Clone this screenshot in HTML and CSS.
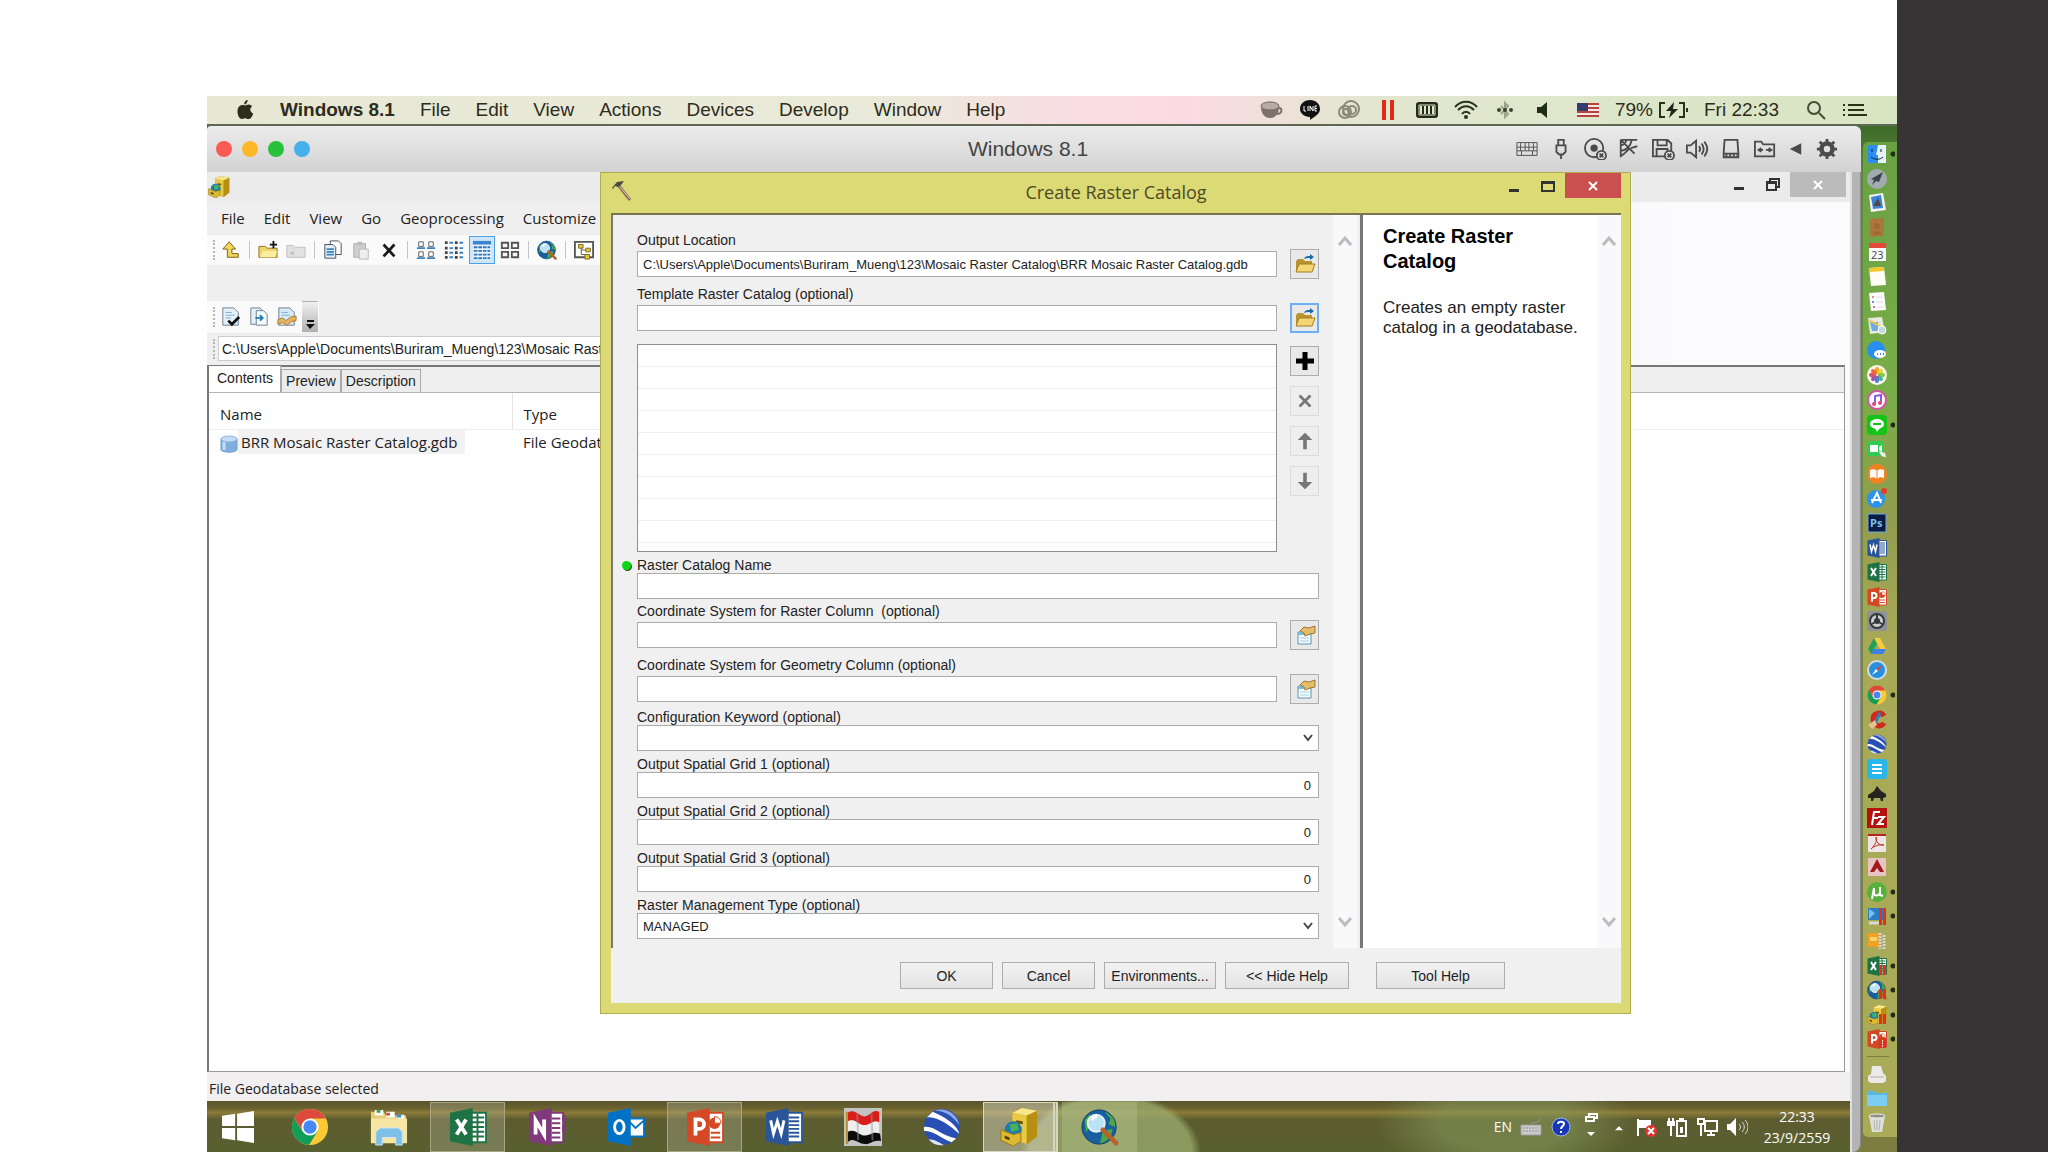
FILE: index.html
```html
<!DOCTYPE html>
<html lang="en">

<head>
    <meta charset="utf-8">
    <title>Create Raster Catalog</title>
    <link rel="stylesheet" href="styles.css">
</head>

<body>
    <!-- icons that are used more than once -->
    <svg class="defs" width="0" height="0">
        <symbol id="chrome" viewBox="0 0 40 40">
            <circle cx="20" cy="20" r="19" fill="#fbc934" />
            <path d="M3.500 10.500A19 19 0 0 0 19 39L28 24.500L12 24.500z" fill="#129d58" />
            <path d="M3.500 10.500A19 19 0 0 1 36.500 11H20L12 24z" fill="#dc4a3d" />
            <circle cx="20" cy="20" r="9" fill="#fff" />
            <circle cx="20" cy="20" r="7" fill="#4587f4" />
        </symbol>
        <symbol id="excel" viewBox="0 0 40 40">
            <path d="M22 5h17v31H22z" fill="#fff" stroke="#1f7244" stroke-width="2" />
            <path d="M24 10h13M24 15h13M24 20h13M24 25h13M24 30h13M30 6v29" stroke="#1f7244" stroke-width="2" />
            <path d="M1 5L25 0V40L1 35z" fill="#1f7244" />
            <path d="M8 12L18 28M18 12L8 28" stroke="#fff" stroke-width="4" />
        </symbol>
        <symbol id="ppt" viewBox="0 0 40 40">
            <path d="M22 5h17v31H22z" fill="#fff" stroke="#d44826" stroke-width="2" />
            <path d="M26 26h10M26 31h10" stroke="#d44826" stroke-width="2" />
            <circle cx="30" cy="16" r="6" fill="#d44826" />
            <path d="M30 16V9a7 7 0 0 1 7 7z" fill="#fff" stroke="#d44826" />
            <path d="M1 5L25 0V40L1 35z" fill="#d44826" />
            <path d="M10 29V12h4a5 5 0 0 1 0 10h-4" fill="none" stroke="#fff" stroke-width="4" />
        </symbol>
        <symbol id="word" viewBox="0 0 40 40">
            <path d="M22 5h17v31H22z" fill="#fff" stroke="#2a5699" stroke-width="2" />
            <path d="M25 10h11M25 14h11M25 18h11M25 22h11M25 26h11M25 30h11" stroke="#2a5699" stroke-width="2" />
            <path d="M1 5L25 0V40L1 35z" fill="#2a5699" />
            <path d="M6 13L9 27L13 14L17 27L20 13" fill="none" stroke="#fff" stroke-width="3" />
        </symbol>
        <symbol id="earth" viewBox="0 0 40 40">
            <circle cx="20" cy="20" r="19" fill="#2a4fb4" />
            <path d="M4 10C14 8 28 18 38 27C38 23 30 12 10 4z" fill="#fff" />
            <path d="M1 20C12 18 20 30 35 32L30 36C22 34 12 24 1 24z" fill="#fff" />
            <path d="M12 3C20 2 32 8 38 18A19 19 0 0 0 12 3z" fill="#8fa9e4" />
            <path d="M6 33C12 33 16 36 22 39C14 40 9 37 6 33z" fill="#dfe8fa" />
        </symbol>
        <symbol id="globe" viewBox="0 0 40 40">
            <circle cx="19" cy="20" r="18" fill="#17609f" stroke="#0e3d6b" />
            <path d="M25 4C33 7 37 14 36 20L29 17L31 11zM23 24L33 22C33 30 27 36 20 37zM4 12L10 6L9 20L5 26z" fill="#4da744" />
            <circle cx="16" cy="16" r="9" fill="#b9e3f4" stroke="#e9eef2" stroke-width="2" />
            <path d="M12 13a5 5 0 0 1 5-4" fill="none" stroke="#fff" stroke-width="3" />
            <path d="M23 23L37 37" stroke="#b5622c" stroke-width="5" stroke-linecap="round" />
        </symbol>
        <symbol id="catalog" viewBox="0 0 40 40">
            <path d="M13 5L22 0L39 3V30L29 38L13 34z" fill="#b98f12" />
            <path d="M13 5L28 8V38L13 33z" fill="#e8ca45" />
            <path d="M13 5L23 0L39 3L28 8z" fill="#f8e88d" />
            <path d="M17 13L24 14V17L17 16z" fill="#6b5308" />
            <circle cx="14" cy="23" r="9" fill="#1e79ad" />
            <path d="M10 17L18 16L20 23L12 25z" fill="#47b25a" />
            <path d="M1 23L14 28L22 26V35L14 40L1 34z" fill="#ddb92f" stroke="#9c7a12" />
            <path d="M5 29L10 31V34L5 32z" fill="#4e3d07" />
        </symbol>
        <symbol id="folder-out" viewBox="0 0 22 22">
            <path d="M2 8L4 6H9L11 8H18V19H2z" fill="#b8952e" />
            <path d="M2 19L5 11H21L18 19z" fill="#f4d774" stroke="#a07f1e" />
            <path d="M10 6C11 3 13 3 16 3V1L20 4L16 7V5C13 5 12 5 10 6z" fill="#1f68a6" />
        </symbol>
        <symbol id="props" viewBox="0 0 22 22">
            <path d="M4 8H17V20H4z" fill="#f5fbfe" stroke="#5a93ad" />
            <path d="M4 8H17V11H4z" fill="#79bfdd" />
            <path d="M6 14h9M6 17h9" stroke="#a5cfe0" />
            <path d="M6 7L10 3L15 4L21 2V9L16 10L11 12L10 9z" fill="#e5bd68" stroke="#9c7730" />
        </symbol>
        <symbol id="pause" viewBox="0 0 20 20">
            <path d="M12 9h3v10h-3zM16 9h3v10h-3z" fill="#e2301f" />
        </symbol>
        <symbol id="chev-up" viewBox="0 0 16 12">
            <path d="M2 10L8 3L14 10" fill="none" stroke="#bdbdbd" stroke-width="3" />
        </symbol>
        <symbol id="chev-down" viewBox="0 0 16 12">
            <path d="M2 2L8 9L14 2" fill="none" stroke="#bdbdbd" stroke-width="3" />
        </symbol>
    </svg>

    <main class="desktop">
        <header class="menubar">
            <nav class="mac-menu">
                <svg class="apple" viewBox="0 0 20 22"><path d="M13 0C13 3 11 5 9 5C9 2 11 0 13 0zM10 6C11 6 12 5 14 5C16 5 17 6 18 7C15 9 15 13 19 15C18 18 16 21 14 21C12 21 12 20 10 20C8 20 8 21 6 21C3 20 1 15 2 10C3 6 6 5 8 5.500z" fill="#2e2c1c" /></svg>
                <a href="#"><b>Windows 8.1</b></a>
                <a href="#">File</a>
                <a href="#">Edit</a>
                <a href="#">View</a>
                <a href="#">Actions</a>
                <a href="#">Devices</a>
                <a href="#">Develop</a>
                <a href="#">Window</a>
                <a href="#">Help</a>
            </nav>
            <div class="mac-status">
                <svg viewBox="0 0 24 20"><ellipse cx="11" cy="6" rx="9" ry="4" fill="#b9aaa2" stroke="#6e625d" /><path d="M2 7C2 13 5 18 11 18S20 13 20 7C16 11 6 11 2 7z" fill="#7d716c" /><path d="M20 8C24 8 23 14 18 14" fill="none" stroke="#7d716c" stroke-width="2" /></svg>
                <svg viewBox="0 0 24 20"><path d="M12 0C18 0 22 4 22 9C22 14 16 17 12 20V17C6 17 2 13 2 9C2 4 6 0 12 0z" fill="#111" /><path d="M6 6v5h2M10 6v5M12 11V6l3 5V6M19 6h-2v5h2M17 8.500h2" fill="none" stroke="#fff" /></svg>
                <svg viewBox="0 0 24 20"><g fill="none" stroke="#8b877b" stroke-width="2"><circle cx="14" cy="9" r="8" /><circle cx="8" cy="12" r="6" /><circle cx="15" cy="10" r="4" /><circle cx="9" cy="12" r="3" /></g></svg>
                <svg viewBox="0 0 24 20"><path d="M6 0h4v20H6zM14 0h4v20h-4z" fill="#e02a14" /></svg>
                <svg viewBox="0 0 24 20"><rect x="1" y="2" width="22" height="16" rx="3" fill="#24291a" /><path d="M6 6v8M10 6v8M14 6v8M18 6v8" stroke="#dfe8cb" stroke-width="2" /><path d="M4 5h16v10H4z" fill="none" stroke="#dfe8cb" /></svg>
                <svg viewBox="0 0 24 20"><g fill="none" stroke="#24351a" stroke-width="2"><path d="M1 7C7 0 17 0 23 7" /><path d="M4 10C9 5 15 5 20 10" /><path d="M8 14C10 11 14 11 16 14" /></g><circle cx="12" cy="17" r="2" fill="#24351a" /></svg>
                <svg viewBox="0 0 24 20"><path d="M8 6L15 14L12 17V3L15 6L8 14" fill="none" stroke="#9aa588" stroke-width="2" /><g fill="#38432d"><circle cx="6" cy="10" r="2" /><circle cx="12" cy="10" r="2" /><circle cx="18" cy="10" r="2" /></g></svg>
                <svg viewBox="0 0 24 20"><path d="M5 7h4l6-5v16l-6-5H5z" fill="#1e2d14" /></svg>
                <svg class="flag" viewBox="0 0 24 20"><rect x="1" y="3" width="22" height="14" fill="#f3e6e0" /><path d="M1 4h22M1 8h22M1 12h22M1 16h22" stroke="#b8423e" stroke-width="2" /><rect x="1" y="3" width="11" height="8" fill="#333b70" /></svg>
                <span class="battery">79% <svg viewBox="0 0 32 20"><path d="M8 3H3v14h5M22 3h5v14h-5" fill="none" stroke="#24351a" stroke-width="2" /><path d="M29 8h2v4h-2z" fill="#24351a" /><path d="M17 2L9 11h5l-2 7l9-9h-5z" fill="#1c2814" /></svg></span>
                <span class="clock">Fri 22:33</span>
                <svg viewBox="0 0 24 20"><circle cx="10" cy="8" r="6" fill="none" stroke="#3f4f33" stroke-width="2" /><path d="M15 13L21 19" stroke="#3f4f33" stroke-width="2" /></svg>
                <svg viewBox="0 0 24 20"><path d="M0 5h2M0 10h2M0 15h2M5 5h16M5 10h16M5 15h19" stroke="#24351a" stroke-width="2" /></svg>
            </div>
        </header>

        <div class="workspace">
            <section class="vm">
                <div class="vm-title">
                    <div class="lights">
                        <button class="light red" aria-label="Close"></button>
                        <button class="light yellow" aria-label="Minimize"></button>
                        <button class="light green" aria-label="Zoom"></button>
                        <button class="light blue" aria-label="Coherence"></button>
                    </div>
                    <h1>Windows 8.1</h1>
                    <div class="vm-icons">
                        <svg viewBox="0 0 24 24"><path d="M1 5h22v14H1zM1 10h22M1 14h22M5 5v9M10 5v9M14 5v9M19 5v9M6 14v5M18 14v5" stroke-width="1" /></svg>
                        <svg viewBox="0 0 24 24"><path d="M9 2h6v6H9zM7 8h10v7l-3 3h-4l-3-3zM12 18v5" /></svg>
                        <svg viewBox="0 0 24 24"><circle cx="11" cy="11" r="10" /><circle cx="11" cy="11" r="3" class="solid" /><circle cx="19" cy="19" r="5" class="disc" /><path d="M17 17l4 4M21 17l-4 4" /></svg>
                        <svg viewBox="0 0 24 24"><path d="M3 2h18M3 2v19M3 2l15 15M3 14C8 14 14 9 15 2M3 8C6 8 9 5 9 2M8 16l4-4M14 11l7-2M3 20l5-4" /></svg>
                        <svg viewBox="0 0 24 24"><path d="M1 2h16l4 4v14H1zM6 2v6h10V2M5 20v-8h12v4" /><circle cx="19" cy="19" r="5" class="disc" /><path d="M17 17l4 4M21 17l-4 4" /></svg>
                        <svg viewBox="0 0 24 24"><path d="M1 8h4l6-5v18l-6-5H1zM14 9C16 11 16 13 14 15M17 6C20 10 20 14 17 18M20 4C24 9 24 15 20 20" /></svg>
                        <svg viewBox="0 0 24 24"><path d="M5 2h14l1 14v5H4v-5zM4 17h16" /><path d="M6 19h2M10 19h2M14 19h2M18 19h1" stroke-width="3" /></svg>
                        <svg viewBox="0 0 24 24"><path d="M1 4h7l2 3h12v13H1zM6 13h4M8 11l-3 2l3 2M13 13h5M16 11l3 2l-3 2" /></svg>
                        <svg class="narrow" viewBox="0 0 24 24"><path d="M18 6v12L6 12z" class="solid" /></svg>
                        <svg viewBox="0 0 24 24"><circle cx="12" cy="12" r="6" stroke-width="5" /><path d="M12 1v5M12 18v5M1 12h5M18 12h5M4 4l4 4M16 16l4 4M20 4l-4 4M8 16l-4 4" stroke-width="3" /></svg>
                    </div>
                </div>

                <div class="vm-body">
                    <div class="guest">
                        <div class="arc-title">
                            <svg class="arc-logo"><use href="#catalog" /></svg>
                            <div class="win-controls">
                                <button aria-label="Minimize"><svg viewBox="0 0 16 16"><path d="M3 10h10v3H3z" fill="#333" /></svg></button>
                                <button aria-label="Restore"><svg viewBox="0 0 16 16"><path d="M2 5h9v8H2zM2 6h9M5 5V2h9v8h-3" fill="none" stroke="#333" stroke-width="2" /></svg></button>
                                <button class="close" aria-label="Close"><svg viewBox="0 0 16 16"><path d="M4 4l8 8M12 4l-8 8" stroke="#fff" stroke-width="2" /></svg></button>
                            </div>
                        </div>
                        <nav class="arc-menu">
                            <a href="#">File</a>
                            <a href="#">Edit</a>
                            <a href="#">View</a>
                            <a href="#">Go</a>
                            <a href="#">Geoprocessing</a>
                            <a href="#">Customize</a>
                        </nav>
                        <div class="toolbar">
                            <i class="grip"></i>
                            <button aria-label="Up one level"><svg viewBox="0 0 22 22"><path d="M9 2L16 10H12V15H19V19H7V10H2z" fill="#f1d65c" stroke="#6f5a12" /></svg></button>
                            <i class="sep"></i>
                            <button aria-label="Connect to folder"><svg viewBox="0 0 22 22"><path d="M1 7h7l2 2h11v10H1z" fill="#ecd56a" stroke="#8a6f1a" /><path d="M2 19l3-7h16l-2 7z" fill="#f9eda0" /><path d="M17 1v8M13 5h8" stroke="#111" stroke-width="2" /></svg></button>
                            <button aria-label="Disconnect folder"><svg viewBox="0 0 22 22"><path d="M1 6h7l2 2h11v11H1z" fill="#e1e1e2" stroke="#bdbdbd" /><path d="M5 13l4 3M9 13l-4 3" stroke="#aaa" /></svg></button>
                            <i class="sep"></i>
                            <button aria-label="Copy"><svg viewBox="0 0 22 22"><path d="M8 1h9l3 3v12H8z" fill="#fff" stroke="#445" /><path d="M2 5h9l3 3v12H2z" fill="#e3f0fb" stroke="#445" /><path d="M4 10h8M4 13h8M4 16h8" stroke="#3c82bd" stroke-width="2" /></svg></button>
                            <button aria-label="Paste"><svg viewBox="0 0 22 22"><path d="M3 4h13v15H3z" fill="#cfcfd0" stroke="#aaa" /><path d="M7 2h5v4H7z" fill="#bbb" /><path d="M9 10h10v11H9z" fill="#eee" stroke="#b5b5b5" /></svg></button>
                            <button aria-label="Delete"><svg viewBox="0 0 22 22"><path d="M5 5L17 18M17 5L5 18" stroke="#1a1a1a" stroke-width="3" /></svg></button>
                            <i class="sep"></i>
                            <button aria-label="Large icons"><svg viewBox="0 0 22 22"><path d="M3 2h5v5H3zM14 2h5v5h-5zM3 13h5v5H3zM14 13h5v5h-5z" fill="#fff" stroke="#555" /><path d="M1 9h9M12 9h9M1 20h9M12 20h9" stroke="#3c82bd" stroke-width="2" /></svg></button>
                            <button aria-label="List"><svg viewBox="0 0 22 22"><path d="M1 3h3M1 9h3M1 14h3M1 19h3M12 3h3M12 9h3M12 14h3M12 19h3" stroke="#444" stroke-width="3" /><path d="M6 3h4M6 9h4M6 14h4M6 19h4M17 3h4M17 9h4M17 14h4M17 19h4" stroke="#3c82bd" stroke-width="2" /></svg></button>
                            <button class="on" aria-label="Details"><svg viewBox="0 0 22 22"><path d="M1 1h20v20H1z" fill="#e5f3ff" /><path d="M1 3h20" stroke="#3a86d0" stroke-width="4" /><path d="M2 8h18M2 12h18M2 16h18M2 20h18" stroke="#3476b5" stroke-width="2" stroke-dasharray="4 1" /></svg></button>
                            <button aria-label="Thumbnails"><svg viewBox="0 0 22 22"><path d="M2 3h7v6H2zM13 3h7v6h-7zM2 13h7v6H2zM13 13h7v6h-7z" fill="#f6f6f6" stroke="#555" stroke-width="2" /></svg></button>
                            <i class="sep"></i>
                            <button aria-label="Launch ArcMap"><svg><use href="#globe" /></svg></button>
                            <i class="sep"></i>
                            <button aria-label="Catalog tree"><svg viewBox="0 0 22 22"><path d="M1 2h20v17H1z" fill="#fff" stroke="#555" stroke-width="2" /><path d="M8 8v8h5M8 11h5" fill="none" stroke="#555" /><path d="M5 5h5v4H5zM13 9h5v4h-5zM12 16h5v5h-5z" fill="#e9c63b" stroke="#7a641c" /></svg></button>
                        </div>
                        <div class="toolbar second">
                            <i class="grip"></i>
                            <button aria-label="Validate"><svg viewBox="0 0 22 22"><path d="M2 1h12l5 5v14H2z" fill="#e4f1fa" stroke="#687987" /><path d="M5 6h7M5 9h10M5 12h6" stroke="#7aa9c9" /><path d="M8 15l4 4l8-8" fill="none" stroke="#111" stroke-width="3" /></svg></button>
                            <button aria-label="Export"><svg viewBox="0 0 22 22"><path d="M2 1h10l4 4v14H2z" fill="#e4f1fa" stroke="#687987" /><path d="M8 4h8l4 4v12H8z" fill="#f3fafe" stroke="#687987" /><path d="M7 12h8M12 9l3 3l-3 3" fill="none" stroke="#1f7ab0" stroke-width="2" /></svg></button>
                            <button aria-label="Properties"><svg viewBox="0 0 22 22"><path d="M2 1h12l5 5v14H2z" fill="#d5eaf6" stroke="#687987" /><path d="M5 6h7M5 9h9" stroke="#7aa9c9" /><path d="M1 14l5-2l4 3l5-4l6-1v5l-5 1l-5 4l-5-3l-5 2z" fill="#e6b45c" stroke="#a5762c" /></svg></button>
                            <button class="more" aria-label="Toolbar options"><svg viewBox="0 0 14 26"><path d="M4 17h7" stroke="#111" stroke-width="2" /><path d="M3 20h9l-5 5z" fill="#111" /></svg></button>
                        </div>
                        <div class="pathbar">
                            <i class="grip"></i>
                            <input type="text" aria-label="Location" value="C:\Users\Apple\Documents\Buriram_Mueng\123\Mosaic Raster Catalog">
                        </div>

                        <div class="content">
                            <div class="tabs">
                                <button class="tab active">Contents</button>
                                <button class="tab">Preview</button>
                                <button class="tab">Description</button>
                            </div>
                            <table class="files">
                                <thead>
                                    <tr>
                                        <th class="name">Name</th>
                                        <th>Type</th>
                                    </tr>
                                </thead>
                                <tbody>
                                    <tr>
                                        <td><svg viewBox="0 0 18 18"><path d="M1 4v11C4 18 14 18 17 15V4z" fill="#7eaede" stroke="#6f9cc9" /><ellipse cx="9" cy="4" rx="8" ry="3" fill="#c3dcf5" stroke="#8fb4da" /><path d="M4 7v8" stroke="#c3dcf5" stroke-width="3" /></svg><span>BRR Mosaic Raster Catalog.gdb</span></td>
                                        <td>File Geodatabase</td>
                                    </tr>
                                </tbody>
                            </table>
                        </div>
                        <div class="statusbar">File Geodatabase selected</div>

                        <footer class="taskbar">
                            <button class="start" aria-label="Start"><svg viewBox="0 0 34 34"><path d="M0 5L14 3V16H0zM16 3L34 0V16H16zM0 18H14V31L0 29zM16 18H34V34L16 31z" fill="#fff" /></svg></button>
                            <button class="task" aria-label="Chrome"><svg><use href="#chrome" /></svg></button>
                            <button class="task" aria-label="Explorer"><svg viewBox="0 0 40 40"><path d="M1 4h13l3 4h21v28H1z" fill="#e7cd78" /><path d="M5 2h9v6H5zM17 4h9v6h-9zM28 7h8v5h-8z" fill="#fff" /><path d="M7 2h4v3H7z" fill="#3da04b" /><path d="M17 5h4v3h-4z" fill="#c9533a" /><path d="M28 7h5v3h-5z" fill="#3d8ec9" /><path d="M1 11h38v26H1z" fill="#f7e6a3" /><path d="M6 39V25L11 21H30L34 25V39H27V31H13V39z" fill="#7fc1e6" stroke="#cbe8f7" /></svg></button>
                            <button class="task open" aria-label="Excel"><svg><use href="#excel" /></svg></button>
                            <button class="task" aria-label="OneNote"><svg viewBox="0 0 40 40"><path d="M22 5h15v31H22z" fill="#fff" stroke="#80397b" stroke-width="2" /><path d="M25 11h9M25 16h9M25 21h9M25 26h9M25 31h9" stroke="#80397b" stroke-width="2" /><path d="M36 8h3v7h-3zM36 18h3v7h-3z" fill="#80397b" /><path d="M1 5L25 0V40L1 35z" fill="#80397b" /><path d="M8 28V13L17 28V12" fill="none" stroke="#fff" stroke-width="4" /></svg></button>
                            <button class="task" aria-label="Outlook"><svg viewBox="0 0 40 40"><path d="M22 11h17v19H22z" fill="#fff" stroke="#0072c6" stroke-width="2" /><path d="M22 13l8 8l9-8" fill="none" stroke="#0072c6" stroke-width="2" /><path d="M1 5L25 0V40L1 35z" fill="#0072c6" /><ellipse cx="13" cy="20" rx="5" ry="7" fill="none" stroke="#fff" stroke-width="3" /></svg></button>
                            <button class="task open" aria-label="PowerPoint"><svg><use href="#ppt" /></svg></button>
                            <button class="task" aria-label="Word"><svg><use href="#word" /></svg></button>
                            <button class="task" aria-label="Flag"><svg viewBox="0 0 40 40"><path d="M0 0h40v40H0z" fill="#c3c3c3" /><path d="M4 5C11 0 16 9 22 9C28 8 30 1 37 4V15C30 12 28 18 22 18C15 19 12 10 4 14z" fill="#d81e1a" /><path d="M4 14C12 10 15 19 22 18C28 18 30 12 37 15V27C30 24 28 29 22 29C15 29 12 21 4 25z" fill="#eee" /><path d="M4 25C12 21 15 29 22 29C28 29 30 24 38 27L39 35C30 33 28 39 22 38C15 38 10 30 4 36z" fill="#0c0c0c" /><path d="M14 6L15 34M29 6L30 34" stroke="#999" stroke-width="2" opacity="0.5" /><path d="M3 4V38" stroke="#b8912b" stroke-width="2" /></svg></button>
                            <button class="task" aria-label="Google Earth"><svg><use href="#earth" /></svg></button>
                            <button class="task open current" aria-label="ArcCatalog"><svg><use href="#catalog" /></svg></button>
                            <button class="task dim" aria-label="ArcMap"><svg><use href="#globe" /></svg></button>

                            <div class="tray">
                                <span>EN</span>
                                <svg viewBox="0 0 22 22"><path d="M1 9h20v10H1z" fill="#ccc" stroke="#999" /><path d="M3 12h16M3 15h16" stroke="#8d8d8d" stroke-dasharray="2 1" /><path d="M11 9C11 5 18 8 21 3" fill="none" stroke="#999" /></svg>
                                <svg viewBox="0 0 22 22"><circle cx="11" cy="11" r="9" fill="#1638b8" stroke="#a6b5e8" /><path d="M8 8C8 5 14 5 14 8C14 10 11 10 11 13M11 15v2" fill="none" stroke="#fff" stroke-width="2" /></svg>
                                <svg class="tall" viewBox="0 0 22 34"><path d="M6 7h8v4H6zM9 7V4h8v4h-3" fill="none" stroke="#fff" stroke-width="2" /><path d="M7 22h8l-4 4z" fill="#fff" /></svg>
                                <svg class="arrow" viewBox="0 0 22 22"><path d="M6 15h10l-5-5z" fill="#fff" /></svg>
                                <svg viewBox="0 0 22 22"><path d="M2 3v17" stroke="#fff" stroke-width="2" /><path d="M3 4h12v8H3z" fill="#fff" /><circle cx="15" cy="15" r="6" fill="#df3434" /><path d="M12 12l6 6M18 12l-6 6" stroke="#fff" stroke-width="2" /></svg>
                                <svg viewBox="0 0 22 22"><path d="M11 5h9v15h-9zM14 3h3v2h-3z" fill="none" stroke="#fff" stroke-width="2" /><path d="M14 11h3v6h-3z" fill="#fff" /><path d="M2 6h6v3H2zM5 10v10M3 2v4M7 2v4" fill="#fff" stroke="#fff" stroke-width="2" /></svg>
                                <svg viewBox="0 0 22 22"><path d="M9 5h12v10H9zM11 19h8M15 15v4" fill="none" stroke="#fff" stroke-width="2" /><path d="M2 3h6v5H2zM5 8v12" fill="none" stroke="#fff" stroke-width="2" /></svg>
                                <svg viewBox="0 0 22 22"><path d="M1 8h3l6-6v18l-6-6H1z" fill="#fff" /><path d="M13 8C15 10 15 12 13 14M16 6C19 9 19 13 16 16M19 4C23 8 23 14 19 18" fill="none" stroke="#ddd" stroke-width="1" /></svg>
                                <div class="date">22:33<br>23/9/2559</div>
                            </div>
                        </footer>

                        <section class="dialog">
                            <header class="dialog-title">
                                <svg class="hammer" viewBox="0 0 22 22"><path d="M8 6L19 20" stroke="#8a7058" stroke-width="3" /><path d="M9 7L19 19" stroke="#d8c7ae" /><path d="M1 8L6 2L13 1L10 5L7 7L4 6L2 9z" fill="#4b4845" /></svg>
                                <h2>Create Raster Catalog</h2>
                                <div class="win-controls">
                                    <button aria-label="Minimize"><svg viewBox="0 0 16 16"><path d="M3 11h10v3H3z" fill="#333" /></svg></button>
                                    <button aria-label="Maximize"><svg viewBox="0 0 16 16"><path d="M2 4h12v9H2zM2 5h12" fill="none" stroke="#333" stroke-width="2" /></svg></button>
                                    <button class="close" aria-label="Close"><svg viewBox="0 0 16 16"><path d="M4 4l8 8M12 4l-8 8" stroke="#fff" stroke-width="2" /></svg></button>
                                </div>
                            </header>
                            <div class="dialog-body">
                                <div class="panels">
                                    <form class="form">
                                        <div class="field browse">
                                            <label for="out">Output Location</label>
                                            <div class="row">
                                                <input type="text" id="out" value="C:\Users\Apple\Documents\Buriram_Mueng\123\Mosaic Raster Catalog\BRR Mosaic Raster Catalog.gdb">
                                                <button type="button" class="square" aria-label="Browse"><svg><use href="#folder-out" /></svg></button>
                                            </div>
                                        </div>
                                        <div class="field browse">
                                            <label for="template">Template Raster Catalog (optional)</label>
                                            <div class="row">
                                                <input type="text" id="template">
                                                <button type="button" class="square focus" aria-label="Browse"><svg><use href="#folder-out" /></svg></button>
                                            </div>
                                        </div>
                                        <div class="list-row">
                                            <div class="list"></div>
                                            <div class="list-buttons">
                                                <button type="button" class="square" aria-label="Add"><svg viewBox="0 0 22 22"><path d="M11 2v18M2 11h18" stroke="#000" stroke-width="5" /></svg></button>
                                                <button type="button" class="square off" aria-label="Remove"><svg viewBox="0 0 22 22"><path d="M5 5l12 12M17 5L5 17" stroke="#777" stroke-width="3" /></svg></button>
                                                <button type="button" class="square off" aria-label="Move up"><svg viewBox="0 0 22 22"><path d="M11 2L19 10H13V20H9V10H3z" fill="#777" /></svg></button>
                                                <button type="button" class="square off" aria-label="Move down"><svg viewBox="0 0 22 22"><path d="M11 20L19 12H13V2H9V12H3z" fill="#777" /></svg></button>
                                            </div>
                                        </div>
                                        <div class="field required">
                                            <label for="name">Raster Catalog Name</label>
                                            <input type="text" id="name">
                                        </div>
                                        <div class="field browse">
                                            <label for="rcol">Coordinate System for Raster Column &nbsp;(optional)</label>
                                            <div class="row">
                                                <input type="text" id="rcol">
                                                <button type="button" class="square" aria-label="Properties"><svg><use href="#props" /></svg></button>
                                            </div>
                                        </div>
                                        <div class="field browse">
                                            <label for="gcol">Coordinate System for Geometry Column (optional)</label>
                                            <div class="row">
                                                <input type="text" id="gcol">
                                                <button type="button" class="square" aria-label="Properties"><svg><use href="#props" /></svg></button>
                                            </div>
                                        </div>
                                        <div class="field">
                                            <label for="keyword">Configuration Keyword (optional)</label>
                                            <select id="keyword">
                                                <option></option>
                                            </select>
                                        </div>
                                        <div class="field">
                                            <label for="grid1">Output Spatial Grid 1 (optional)</label>
                                            <input type="text" class="number" id="grid1" value="0">
                                        </div>
                                        <div class="field">
                                            <label for="grid2">Output Spatial Grid 2 (optional)</label>
                                            <input type="text" class="number" id="grid2" value="0">
                                        </div>
                                        <div class="field">
                                            <label for="grid3">Output Spatial Grid 3 (optional)</label>
                                            <input type="text" class="number" id="grid3" value="0">
                                        </div>
                                        <div class="field">
                                            <label for="manage">Raster Management Type (optional)</label>
                                            <select id="manage">
                                                <option>MANAGED</option>
                                            </select>
                                        </div>
                                    </form>
                                    <div class="scroll">
                                        <svg><use href="#chev-up" /></svg>
                                        <svg><use href="#chev-down" /></svg>
                                    </div>
                                    <div class="help">
                                        <div class="help-text">
                                            <h3>Create Raster Catalog</h3>
                                            <p>Creates an empty raster catalog in a geodatabase.</p>
                                        </div>
                                        <div class="scroll">
                                            <svg><use href="#chev-up" /></svg>
                                            <svg><use href="#chev-down" /></svg>
                                        </div>
                                    </div>
                                </div>
                                <div class="dialog-buttons">
                                    <button class="short">OK</button>
                                    <button class="short">Cancel</button>
                                    <button class="medium">Environments...</button>
                                    <button class="long">&lt;&lt; Hide Help</button>
                                    <button class="long tool-help">Tool Help</button>
                                </div>
                            </div>
                        </section>
                    </div>
                    <div class="vm-edge"></div>
                </div>
            </section>

            <aside class="dock">
                <svg class="running" viewBox="0 0 20 20"><path d="M1 1h18v18H1z" fill="#e8f2fb" /><path d="M1 1h10L9 11h2v8H1z" fill="#2b8df0" /><path d="M5 5v3M14 5v3M4 13C8 16 13 16 16 13" fill="none" stroke="#123" /></svg>
                <svg viewBox="0 0 20 20"><circle cx="10" cy="10" r="10" fill="#a4abb0" /><path d="M16 3L12 13L9 12L5 16L7 11L4 10z" fill="#39434a" /></svg>
                <svg viewBox="0 0 20 20"><path d="M2 2L16 0L19 17L4 19z" fill="#f2f2f2" /><path d="M4 4L14 2L16 15L6 16z" fill="#3b82d6" /><path d="M6 13L11 5L14 13z" fill="#51473c" /></svg>
                <svg viewBox="0 0 20 20"><path d="M3 1L17 0V18L3 19z" fill="#ac763d" /><circle cx="10" cy="8" r="3" fill="#9c6a35" /><path d="M6 15h8" stroke="#9c6a35" stroke-width="3" /></svg>
                <svg viewBox="0 0 20 20"><path d="M2 1h17v18H2z" fill="#fafafa" /><path d="M2 1h17v5H2z" fill="#e5483e" /><text x="4" y="17" class="cal">23</text></svg>
                <svg viewBox="0 0 20 20"><path d="M2 1L17 0L19 18L4 19z" fill="#fffdf4" /><path d="M2 1L17 0V4L2 5z" fill="#f5c62c" /></svg>
                <svg viewBox="0 0 20 20"><path d="M2 1L17 0L19 18L4 19z" fill="#fdfdfd" /><circle cx="6" cy="5" r="1" fill="#e66" /><circle cx="6" cy="10" r="1" fill="#46c" /><circle cx="7" cy="15" r="1" fill="#a4c" /><path d="M9 5h7M9 10h7M10 15h7" stroke="#ddd" /></svg>
                <svg viewBox="0 0 20 20"><path d="M1 2L15 1L18 16L3 18z" fill="#e5ead9" /><path d="M3 6h8v9H5z" fill="#6fa9e6" /><path d="M2 4l14 8" stroke="#f3c84b" stroke-width="2" /><circle cx="15" cy="14" r="4" fill="#c5d8dd" stroke="#fff" /></svg>
                <svg viewBox="0 0 20 20"><circle cx="9" cy="9" r="9" fill="#2a8df2" /><ellipse cx="13" cy="13" rx="6" ry="4" fill="#fff" /><path d="M10 13h1M13 13h1M16 13h1" stroke="#2a8df2" stroke-width="2" /></svg>
                <svg viewBox="0 0 20 20"><circle cx="10" cy="10" r="10" fill="#f8f6f0" /><g stroke-width="4" stroke-linecap="round"><path d="M10 7V4" stroke="#f7a51e" /><path d="M12 8l2-2" stroke="#e8d52b" /><path d="M13 10h3" stroke="#8fc63e" /><path d="M12 12l2 2" stroke="#48b58a" /><path d="M10 13v3" stroke="#4d7fd0" /><path d="M8 12l-2 2" stroke="#9459b5" /><path d="M7 10H4" stroke="#d9506b" /><path d="M8 8L6 6" stroke="#ee6a3b" /></g></svg>
                <svg viewBox="0 0 20 20"><circle cx="10" cy="10" r="9" fill="#fff" stroke="#da4fa8" stroke-width="2" /><path d="M8 14V6l6-1v8" fill="none" stroke="#8a55e0" stroke-width="2" /><circle cx="7" cy="14" r="2" fill="#e2467a" /><circle cx="13" cy="13" r="2" fill="#e2467a" /></svg>
                <svg class="running" viewBox="0 0 20 20"><rect width="20" height="20" rx="4" fill="#14c316" /><ellipse cx="10" cy="9" rx="7" ry="5" fill="#fff" /><path d="M8 13l2 4l3-4z" fill="#fff" /><path d="M6 9h8" stroke="#14c316" stroke-width="2" /></svg>
                <svg viewBox="0 0 20 20"><rect width="17" height="15" y="2" rx="3" fill="#2fcc51" /><path d="M3 6h8v7H3zM12 8l3-2v7l-3-2z" fill="#fff" /><path d="M12 12C13 16 15 18 19 18L18 14z" fill="#eee" /></svg>
                <svg viewBox="0 0 20 20"><circle cx="10" cy="10" r="10" fill="#f08222" /><path d="M3 6C6 5 8 5 10 7C12 5 14 5 17 6V14C14 13 12 13 10 15C8 13 6 13 3 14z" fill="#fff" /><path d="M10 7v8" stroke="#f08222" /></svg>
                <svg viewBox="0 0 20 20"><circle cx="9" cy="11" r="9" fill="#2b93ec" /><path d="M5 15L10 5L14 15M4 12h11" fill="none" stroke="#fff" stroke-width="2" /><circle cx="17" cy="3" r="3" fill="#e93a2a" /></svg>
                <svg viewBox="0 0 20 20"><path d="M1 1h18v18H1z" fill="#0b1c44" stroke="#6fa8dc" /><text x="3" y="14" class="ps">Ps</text></svg>
                <svg><use href="#word" /></svg>
                <svg><use href="#excel" /></svg>
                <svg><use href="#ppt" /></svg>
                <svg viewBox="0 0 20 20"><rect width="20" height="20" rx="3" fill="#8e9294" /><circle cx="10" cy="10" r="7" fill="#ccc" stroke="#34383b" stroke-width="2" /><circle cx="10" cy="10" r="3" fill="#34383b" /><path d="M10 10V4M10 10l5 3M10 10l-5 3" stroke="#34383b" stroke-width="2" /></svg>
                <svg viewBox="0 0 20 20"><path d="M7 2h6l6 11h-6z" fill="#f7cc3b" /><path d="M7 2L1 13l3 5L10 8z" fill="#21a05d" /><path d="M7 13h12l-3 5H4z" fill="#3f7ee8" /></svg>
                <svg viewBox="0 0 20 20"><circle cx="10" cy="10" r="9" fill="#2a8fe0" stroke="#cfdbe3" stroke-width="2" /><path d="M15 5L11 11L9 9z" fill="#e3402f" /><path d="M5 15L11 11L9 9z" fill="#fff" /></svg>
                <svg class="running"><use href="#chrome" /></svg>
                <svg viewBox="0 0 20 20"><path d="M17 6C14 1 6 3 6 9C6 16 14 18 17 13" fill="none" stroke="#d0291f" stroke-width="5" /><path d="M13 3L8 13" stroke="#3a78b5" stroke-width="3" /><path d="M1 15L8 10L10 15L5 19z" fill="#e3c28e" /></svg>
                <svg><use href="#earth" /></svg>
                <svg viewBox="0 0 20 20"><rect width="20" height="20" rx="3" fill="#29b6ea" /><path d="M5 6h10M5 10h10M5 14h10" stroke="#fff" stroke-width="2" /></svg>
                <svg viewBox="0 0 20 20"><path d="M1 12L7 8L10 3L14 8L19 11V14L16 15V18H14L13 15H7L6 18H4V15H1z" fill="#25241f" /></svg>
                <svg viewBox="0 0 20 20"><path d="M0 0h20v20H0z" fill="#b3130f" /><path d="M5 17L7 4h6M6 10h5M11 9h6l-6 7h6" fill="none" stroke="#fff" stroke-width="2" /></svg>
                <svg viewBox="0 0 20 20"><path d="M1 1h18v18H1z" fill="#eee6e4" /><path d="M1 1h18v2H1z" fill="#b3241c" /><path d="M4 16C8 12 11 7 9 4C8 8 12 13 17 12C12 11 7 13 4 16z" fill="none" stroke="#c22d24" stroke-width="1" /></svg>
                <svg viewBox="0 0 20 20"><path d="M1 1h18v18H1z" fill="#e7c3c3" /><path d="M10 2L17 15H13L10 11L7 15H3z" fill="#a11a1d" /></svg>
                <svg class="running" viewBox="0 0 20 20"><circle cx="10" cy="10" r="10" fill="#57b03b" /><path d="M5 17L7 6V12C9 15 12 13 13 11V5V13L16 14" fill="none" stroke="#fff" stroke-width="2" /></svg>
                <svg class="running" viewBox="0 0 20 20"><path d="M1 2h15v12H1z" fill="#2a7ec1" /><path d="M2 3l6 4l-6 6z" fill="#72c5ee" /><path d="M2 17h12" stroke="#d8d8d8" stroke-width="3" /><path d="M12 2h3v17h-3zM16 2h3v17h-3z" fill="#e2301f" /></svg>
                <svg viewBox="0 0 20 20"><path d="M1 2h11v14H1z" fill="#f0a022" /><path d="M3 6h7v4H3z" fill="#fbd26b" /><path d="M13 2v16M17 4v14" stroke="#d5d5d5" stroke-width="3" stroke-dasharray="2 1" /></svg>
                <svg class="running"><use href="#excel" /><use href="#pause" /></svg>
                <svg class="running"><use href="#globe" /><use href="#pause" /></svg>
                <svg class="running"><use href="#catalog" /><use href="#pause" /></svg>
                <svg class="running"><use href="#ppt" /><use href="#pause" /></svg>
                <hr>
                <svg viewBox="0 0 20 20"><path d="M5 2h9l2 7l3 3v5l-3 2H4l-3-2v-5l3-2z" fill="#eceae8" /><path d="M3 13h14" stroke="#cfccc8" stroke-width="2" /></svg>
                <svg viewBox="0 0 20 20"><path d="M0 3h7l2 2h11v13H0z" fill="#55b8e6" /><path d="M0 7h20v11H0z" fill="#7bcdf1" /></svg>
                <svg viewBox="0 0 20 20"><path d="M2 3h16l-3 16H5z" fill="#dededa" /><ellipse cx="10" cy="3" rx="8" ry="2" fill="#8f8f88" stroke="#eee" /><path d="M7 7l1 10M10 7v10M13 7l-1 10" stroke="#b3b3ad" /></svg>
            </aside>
        </div>
    </main>
    <aside class="side"></aside>
</body>

</html>
```
FILE: styles.css
```css
* {
    box-sizing: border-box;
}

body {
    margin: 0;
    min-height: 100vh;
    display: flex;
    background-color: #fff;
    font-family: "Open Sans", "Noto Sans", sans-serif;
    font-size: 15px;
    color: #222;
}

button,
input,
select {
    font-family: inherit;
    font-size: inherit;
    color: inherit;
    margin: 0;
    padding: 0;
}

a {
    color: inherit;
    text-decoration: none;
}

h1,
h2,
h3,
p {
    margin: 0;
    font-weight: normal;
}

.defs {
    position: absolute;
}

.side {
    width: 151px;
    background-color: #363435;
}

.desktop {
    flex: 1;
    min-width: 0;
    padding: 96px 0 0 207px;
    display: flex;
    flex-direction: column;
}

/* mac menu bar */
.menubar {
    height: 30px;
    display: flex;
    justify-content: space-between;
    align-items: center;
    background: linear-gradient(90deg, #e6e8d4 0%, #e9ead9 40%, #fadde4 52%, #fbdbe3 58%, #e3e6d0 68%, #d8e5c3 100%);
    border-bottom: 2px solid #5d6753;
    font-family: "Liberation Sans", Arial, sans-serif;
    font-size: 19px;
    color: #2e2c1c;
}

.mac-menu {
    display: flex;
    align-items: center;
    gap: 25px;
    padding-left: 28px;
}

.apple {
    width: 20px;
    height: 20px;
}

.mac-status {
    display: flex;
    align-items: center;
    gap: 15px;
    padding-right: 30px;
}

.mac-status svg {
    width: 24px;
    height: 20px;
}

.mac-status .flag {
    margin-left: 5px;
}

.battery {
    display: flex;
    align-items: center;
    gap: 4px;
}

.battery svg {
    width: 32px;
}

.clock {
    margin-right: 10px;
}

.workspace {
    flex: 1;
    display: flex;
    background: linear-gradient(#3f6a2b, #5c8c38 5%, #6f8a40 40%, #7d7d40 100%);
}

/* virtual machine window */
.vm {
    flex: 1;
    min-width: 0;
    display: flex;
    flex-direction: column;
}

.vm-title {
    height: 46px;
    display: grid;
    grid-template-columns: 1fr auto 1fr;
    align-items: center;
    padding-right: 12px;
    background: linear-gradient(#ececec, #d3d2d3);
    border-radius: 4px 6px 0 0;
}

.vm-title h1 {
    font-family: "Liberation Sans", Arial, sans-serif;
    font-size: 21px;
    color: #444;
}

.lights {
    display: flex;
    gap: 10px;
    padding-left: 9px;
}

.light {
    width: 16px;
    height: 16px;
    border: none;
    border-radius: 50%;
}

.red {
    background-color: #fb5a52;
}

.yellow {
    background-color: #fdb827;
}

.green {
    background-color: #27c13a;
}

.blue {
    background-color: #43b0ea;
}

.vm-icons {
    display: flex;
    justify-content: flex-end;
    gap: 10px;
    padding-right: 10px;
}

.vm-icons svg {
    width: 24px;
    height: 22px;
    fill: none;
    stroke: #4b4b4b;
    stroke-width: 2;
}

.vm-icons .narrow {
    width: 18px;
}

.vm-icons .solid {
    fill: #4b4b4b;
}

.vm-icons .disc {
    fill: #ddd;
}

.vm-body {
    flex: 1;
    display: flex;
}

.vm-edge {
    width: 11px;
    background-color: #b4b4b4;
    border-left: 2px solid #dedede;
    border-right: 1px solid #8a8a8a;
    border-radius: 0 0 8px 0;
}

.guest {
    position: relative;
    flex: 1;
    min-width: 0;
    display: flex;
    flex-direction: column;
    background: linear-gradient(90deg, #f0eff0 70%, #fbfafc 90%);
}

.win-controls {
    display: flex;
    align-items: flex-start;
}

.win-controls button {
    width: 34px;
    height: 25px;
    display: flex;
    justify-content: center;
    align-items: center;
    border: none;
    background: none;
}

.win-controls svg {
    width: 16px;
    height: 16px;
}

.win-controls .close {
    width: 56px;
    background-color: #bcbbbc;
}

.arc-title {
    height: 30px;
    display: flex;
    justify-content: space-between;
    align-items: flex-start;
    padding: 0 4px 0 1px;
    background-color: #ebebec;
}

.arc-logo {
    width: 22px;
    height: 22px;
    margin-top: 4px;
}

.arc-menu {
    height: 33px;
    display: flex;
    align-items: center;
    gap: 19px;
    padding: 0 0 2px 14px;
}

.toolbar {
    width: 393px;
    height: 30px;
    display: flex;
    align-items: center;
    gap: 2px;
    padding-left: 6px;
    overflow: hidden;
    background-color: #fafafa;
}

.toolbar button {
    flex-shrink: 0;
    width: 26px;
    height: 28px;
    padding: 2px;
    border: 1px solid transparent;
    background: none;
}

.toolbar svg {
    display: block;
    width: 20px;
    height: 22px;
}

.toolbar .on {
    border-color: #4da0e8;
    background-color: #cde6fb;
}

.grip {
    width: 3px;
    height: 20px;
    border-left: 2px dotted #b5b5b5;
}

.sep {
    width: 1px;
    height: 18px;
    margin: 0 3px;
    background-color: #c6c6c6;
}

.second {
    width: 112px;
    height: 32px;
    margin-top: 36px;
}

.toolbar .more {
    width: 16px;
    height: 32px;
    padding: 0;
    background: linear-gradient(#f0f0f0, #b0b0b0);
}

.more svg {
    width: 14px;
    height: 26px;
}

.pathbar {
    display: flex;
    align-items: center;
    gap: 2px;
    padding: 3px 0 4px 6px;
}

.pathbar input {
    width: 560px;
    height: 25px;
    padding: 0 3px;
    border: 1px solid #ccc;
    background-color: #fff;
    font-family: "Liberation Sans", Arial, sans-serif;
    font-size: 14px;
}

.content {
    flex: 1;
    margin-right: 5px;
    border: 1px solid #9a9a9a;
    border-top: 2px solid #777;
    border-left: 2px solid #777;
    background-color: #fff;
}

.tabs {
    display: flex;
    align-items: flex-end;
    height: 26px;
    border-bottom: 1px solid #b5b5b5;
    background-color: #efeeef;
    font-family: "Liberation Sans", Arial, sans-serif;
    font-size: 14px;
}

.tab {
    height: 23px;
    padding: 0 4px;
    border: 1px solid #a9a9a9;
    border-bottom: none;
    background-color: #ececec;
}

.tab.active {
    height: 26px;
    padding: 0 7px 3px;
    border-color: #fff #a9a9a9 #fff #fff;
    background-color: #fff;
}

.files {
    width: 100%;
    border-collapse: collapse;
    table-layout: fixed;
}

.files th {
    height: 36px;
    padding: 6px 0 0 11px;
    text-align: left;
    font-weight: normal;
    border-bottom: 1px solid #eee;
}

.files .name {
    width: 303px;
    border-right: 1px solid #e5e5e5;
}

.files td {
    height: 26px;
    padding: 0 10px 0 11px;
    line-height: 24px;
}

.files td span {
    display: inline-block;
    padding: 0 8px 0 3px;
    background-color: #f2f2f2;
}

.files svg {
    width: 18px;
    height: 18px;
    vertical-align: middle;
}

.statusbar {
    height: 29px;
    padding-left: 2px;
    font-size: 14px;
    line-height: 34px;
    background-color: #f1eff0;
}

/* windows taskbar */
.taskbar {
    height: 51px;
    display: flex;
    align-items: center;
    gap: 4px;
    padding-right: 12px;
    background:
        radial-gradient(ellipse 90px 60px at 55% 100%, rgba(160, 178, 115, 0.7) 90%, transparent),
        radial-gradient(ellipse 130px 60px at 79% 40%, rgba(140, 160, 95, 0.5) 50%, transparent),
        linear-gradient(#57542d, #6d6430 16%, #8d7c38 22%, #5c5c31 36%, #59602f 100%);
}

.start,
.task {
    height: 50px;
    width: 75px;
    display: flex;
    justify-content: center;
    align-items: center;
    border: 1px solid transparent;
    background: none;
}

.start {
    width: 61px;
}

.start svg {
    width: 34px;
    height: 32px;
}

.task svg {
    width: 40px;
    height: 38px;
}

.open {
    border-color: #a5a586;
    background-color: rgba(190, 190, 165, 0.3);
}

.current {
    border-color: #d8d6c0;
    border-right: 5px double #d8d6c0;
    background-color: rgba(215, 212, 190, 0.5);
}

.dim {
    background-color: rgba(190, 200, 150, 0.35);
}

.tray {
    flex: 1;
    display: flex;
    justify-content: flex-end;
    align-items: center;
    gap: 8px;
    font-size: 14px;
    color: #fff;
}

.tray svg {
    width: 22px;
    height: 22px;
}

.tray .tall {
    height: 34px;
}

.tray .arrow {
    width: 18px;
}

.date {
    width: 82px;
    text-align: center;
    line-height: 21px;
}

/* create raster catalog */
.dialog {
    position: absolute;
    top: 0;
    left: 393px;
    right: 219px;
    bottom: 138px;
    display: flex;
    flex-direction: column;
    padding: 0 9px 10px 10px;
    border: 1px solid #b0ad52;
    background-color: #dbda75;
}

.dialog-title {
    height: 40px;
    display: grid;
    grid-template-columns: 1fr auto 1fr;
    align-items: center;
}

.dialog-title h2 {
    padding-bottom: 2px;
    font-size: 18px;
    color: #4d4b25;
}

.dialog-title .win-controls {
    align-self: start;
    justify-content: flex-end;
}

.dialog-title .close {
    background-color: #c9504e;
}

.hammer {
    width: 22px;
    height: 22px;
    margin-bottom: 4px;
}

.dialog-body {
    flex: 1;
    display: flex;
    flex-direction: column;
    background-color: #f1f0f1;
    font-family: "Liberation Sans", Arial, sans-serif;
    font-size: 14px;
}

.panels {
    flex: 1;
    display: flex;
    border-top: 2px solid #777650;
}

.form {
    flex: 1;
    display: flex;
    flex-direction: column;
    gap: 3px;
    padding: 16px 14px 6px 24px;
    border-left: 2px solid #777;
}

.form input,
.form select {
    flex: 1;
    min-width: 0;
    height: 26px;
    padding: 0 5px;
    border: 1px solid #ababab;
    border-radius: 0;
    background-color: #fff;
    font-size: 13px;
}

.form .number {
    text-align: right;
    padding-right: 7px;
}

.form select {
    appearance: none;
    background-image: url("data:image/svg+xml,%3Csvg xmlns='http://www.w3.org/2000/svg' width='10' height='8'%3E%3Cpath d='M1 1l4 5l4-5' fill='none' stroke='%23444' stroke-width='2'/%3E%3C/svg%3E");
    background-position: right 5px center;
    background-repeat: no-repeat;
}

.field {
    display: flex;
    flex-direction: column;
}

.form .field > input,
.form .field > select {
    flex: none;
}

.field label {
    height: 18px;
    line-height: 20px;
}

.browse label {
    line-height: 18px;
}

.browse + .browse {
    margin-top: 3px;
}

/* green dot in front of a mandatory parameter */
.required label::before {
    content: "";
    float: left;
    width: 9px;
    height: 9px;
    margin: 6px 6px 0 -15px;
    border-radius: 50%;
    background-color: #0bd714;
    box-shadow: 1px 1px 0 #245c22;
}

.row,
.list-row {
    display: flex;
    align-items: center;
    gap: 13px;
}

.list-row {
    align-items: stretch;
    margin-top: 8px;
}

.list {
    flex: 1;
    height: 208px;
    border: 1px solid #8f8f8f;
    background: repeating-linear-gradient(#fff 0 21px, #efeff2 21px 22px);
}

.list-buttons {
    display: flex;
    flex-direction: column;
    gap: 10px;
    padding-top: 2px;
}

.square {
    width: 29px;
    height: 30px;
    display: flex;
    justify-content: center;
    align-items: center;
    border: 1px solid #adadad;
    background-color: #e9e9e9;
}

.square svg {
    flex-shrink: 0;
    width: 22px;
    height: 22px;
}

.square.focus {
    border: 2px solid #6bb0f5;
}

.square.off {
    border-color: #dcdcdc;
    background-color: #efeeef;
}

.square.off svg {
    width: 20px;
}

.scroll {
    width: 24px;
    display: flex;
    flex-direction: column;
    justify-content: space-between;
    align-items: center;
    padding: 20px 0;
    background-color: #f9f8fa;
}

.scroll svg {
    width: 16px;
    height: 12px;
}

.help {
    width: 261px;
    display: flex;
    margin-left: 3px;
    border-left: 3px solid #777;
    background-color: #fff;
}

.help-text {
    flex: 1;
    padding: 9px 16px 0 20px;
}

.help h3 {
    font-size: 20px;
    font-weight: bold;
    line-height: 25px;
    color: #000;
}

.help p {
    margin-top: 24px;
    font-size: 17px;
    line-height: 20px;
}

.dialog-buttons {
    height: 55px;
    display: flex;
    justify-content: flex-end;
    gap: 9px;
    padding: 14px 116px 0 0;
}

.dialog-buttons button {
    height: 27px;
    border: 1px solid #adadad;
    background: linear-gradient(#f2f2f2, #e4e4e4);
}

.dialog-buttons .short {
    width: 93px;
}

.dialog-buttons .medium {
    width: 112px;
}

.dialog-buttons .long {
    width: 124px;
}

.dialog-buttons .tool-help {
    width: 129px;
    margin-left: 18px;
}

/* dock on the right */
.dock {
    width: 34px;
    display: flex;
    flex-direction: column;
    justify-content: space-between;
    margin: 16px 0 15px 2px;
    padding: 2px 10px 4px 4px;
    border-radius: 5px 0 0 5px;
    background: linear-gradient(#68a044, #79ad48 25%, #929c4f 38%, #a8a957 50%, #a9ab58 100%);
}

.dock svg {
    width: 20px;
    height: 20px;
}

/* small dot beside the running apps */
.dock .running {
    width: 28px;
    padding-right: 8px;
    background: radial-gradient(circle at 26px 10px, #222b14 2px, transparent 3px);
}

.dock hr {
    width: 22px;
    margin: 2px 0;
    border: none;
    border-top: 1px solid #7d8040;
}

.cal {
    font-size: 11px;
    fill: #444;
}

.ps {
    font-size: 11px;
    font-weight: bold;
    fill: #7cc3f2;
}
```
